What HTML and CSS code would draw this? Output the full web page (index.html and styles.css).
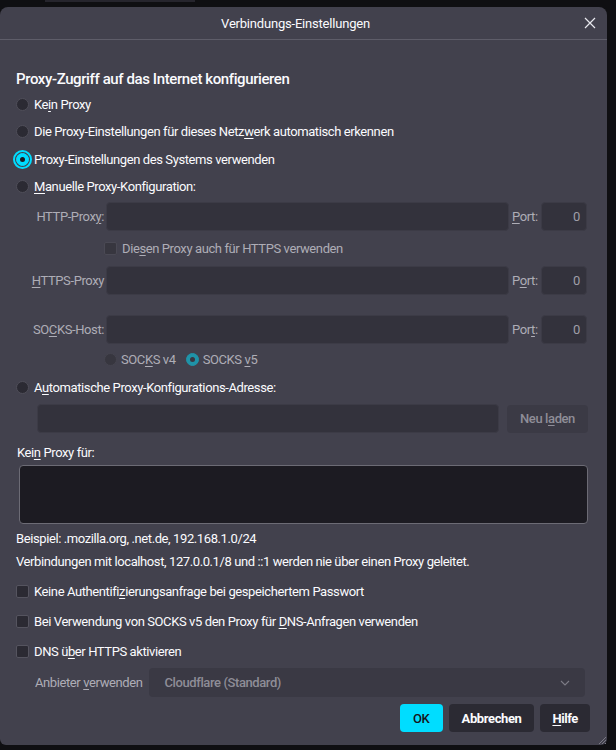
FILE: index.html
```html
<!DOCTYPE html>
<html lang="de">
<head>
<meta charset="utf-8">
<title>Verbindungs-Einstellungen</title>
<link rel="stylesheet" href="styles.css">
</head>
<body>
<div class="backdrop-strip"></div>
<div class="dialog">
  <div class="titlebar">
    <div class="title">Verbindungs-Einstellungen</div>
    <div class="close">
      <svg width="12" height="12" viewBox="0 0 12 12"><path d="M1 1 L11 11 M11 1 L1 11" stroke="#e8e8ee" stroke-width="1.2" fill="none"/></svg>
    </div>
  </div>
  <div class="content">
    <h1 class="heading">Proxy-Zugriff auf das Internet konfigurieren</h1>
    <div class="option"><span class="radio"></span><span>Ke<u>i</u>n Proxy</span></div>
    <div class="option"><span class="radio"></span><span>Die Proxy-Einstellungen für dieses Netz<u>w</u>erk automatisch erkennen</span></div>
    <div class="option"><span class="radio checked focus"></span><span>Proxy-Einstellungen des Systems verwenden</span></div>
    <div class="option"><span class="radio"></span><span><u>M</u>anuelle Proxy-Konfiguration:</span></div>

    <div class="proxy-grid">
      <div class="plabel">HTTP-Prox<u>y</u>:</div>
      <div class="field"></div>
      <div class="portlabel"><u>P</u>ort:</div>
      <div class="field port">0</div>

      <div class="check-row">
        <span class="box disabled"></span><span>Die<u>s</u>en Proxy auch für HTTPS verwenden</span>
      </div>

      <div class="plabel"><u>H</u>TTPS-Proxy</div>
      <div class="field"></div>
      <div class="portlabel">P<u>o</u>rt:</div>
      <div class="field port">0</div>

      <div class="spacer"></div>

      <div class="plabel">SO<u>C</u>KS-Host:</div>
      <div class="field"></div>
      <div class="portlabel">Por<u>t</u>:</div>
      <div class="field port">0</div>

      <div class="socks-row">
        <span class="radio disabled"></span><span>SOC<u>K</u>S v4</span>
        <span class="radio checked disabled v5"></span><span>SOCKS <u>v</u>5</span>
      </div>
    </div>

    <div class="option auto"><span class="radio"></span><span>A<u>u</u>tomatische Proxy-Konfigurations-Adresse:</span></div>
    <div class="auto-row">
      <div class="field grow"></div>
      <div class="btn-disabled">Neu l<u>a</u>den</div>
    </div>

    <div class="noproxy-label">Kei<u>n</u> Proxy für:</div>
    <div class="textarea"></div>
    <div class="hint first">Beispiel: .mozilla.org, .net.de, 192.168.1.0/24</div>
    <div class="hint">Verbindungen mit localhost, 127.0.0.1/8 und ::1 werden nie über einen Proxy geleitet.</div>

    <div class="check"><span class="box"></span><span>Keine Authentifi<u>z</u>ierungsanfrage bei gespeichertem Passwort</span></div>
    <div class="check"><span class="box"></span><span>Bei Verwendung von SOCKS v5 den Proxy für <u>D</u>NS-Anfragen verwenden</span></div>
    <div class="check"><span class="box"></span><span>DNS ü<u>b</u>er HTTPS aktivieren</span></div>

    <div class="provider-row">
      <div class="provider-label">Anbieter <u>v</u>erwenden</div>
      <div class="select">
        <span>Cloudflare (Standard)</span>
        <svg width="10" height="6" viewBox="0 0 10 6"><path d="M1 1 L5 5 L9 1" stroke="#7d7c86" stroke-width="1.1" fill="none"/></svg>
      </div>
    </div>

    <div class="buttons">
      <div class="btn primary">OK</div>
      <div class="btn wide">Abbrechen</div>
      <div class="btn"><u>H</u>ilfe</div>
    </div>
  </div>
  <svg class="grip" width="8" height="8" viewBox="0 0 8 8"><path d="M8 1 L1 8 M8 4 L4 8 M8 7 L7 8" stroke="#7a7984" stroke-width="1" fill="none"/></svg>
</div>
</body>
</html>
```

FILE: styles.css
```css
* { box-sizing: border-box; }

html, body {
  margin: 0;
  padding: 0;
  background: #0f0f12;
}

body {
  width: 616px;
  height: 750px;
  overflow: hidden;
  font-family: Roboto, "Noto Sans", sans-serif;
  font-size: 13px;
  letter-spacing: -0.4px;
  color: #fbfbfe;
}

u { text-decoration: underline; text-underline-offset: 2px; }

.backdrop-strip {
  margin-left: 45px;
  width: 150px;
  height: 2px;
  background: #26252d;
  margin-bottom: 5px;
}

.dialog {
  position: relative;
  width: 607px;
  height: 738px;
  background: #42414d;
  border-radius: 8px 8px 6px 6px;
}

.titlebar {
  height: 33px;
  display: flex;
  align-items: center;
  padding-left: 12px;
  padding-right: 6px;
  border-bottom: 1px solid #5e5d69;
}

.title {
  flex: 1;
  text-align: center;
  font-size: 13px;
  letter-spacing: -0.2px;
}

.close {
  width: 22px;
  height: 22px;
  display: flex;
  align-items: center;
  justify-content: center;
}

.content {
  padding: 0 17px 0 16px;
}

.heading {
  margin: 29px 0 2px;
  font-size: 15px;
  font-weight: 500;
  letter-spacing: -0.4px;
  line-height: 20px;
}

.option {
  height: 27.3px;
  display: flex;
  align-items: center;
  gap: 5px;
}

.radio {
  width: 13px;
  height: 13px;
  border-radius: 50%;
  background: #2b2a33;
  border: 1px solid #4f4e59;
  flex: none;
  position: relative;
}

.radio.checked {
  background: #00ddff;
  border-color: #00ddff;
}

.radio.checked::after {
  content: "";
  position: absolute;
  left: 3px;
  top: 3px;
  width: 5px;
  height: 5px;
  border-radius: 50%;
  background: #1c1b22;
}

.radio.focus {
  outline: 2px solid #00ddff;
  outline-offset: 1px;
}

.radio.disabled {
  background: #37363f;
  border-color: #45444f;
}

.radio.checked.disabled {
  background: #1f93a8;
  border-color: #1f93a8;
}

.radio.checked.disabled::after {
  background: #383742;
}

.proxy-grid {
  margin-top: 2px;
  display: grid;
  grid-template-columns: 88px 403px 28px 46px;
  column-gap: 2px;
  align-items: center;
}

.plabel {
  text-align: right;
  color: #aeadb6;
  white-space: nowrap;
}

.portlabel {
  color: #aeadb6;
  padding-left: 1px;
}

.field {
  height: 29px;
  background: #33323c;
  border: 1px solid #3c3b46;
  border-radius: 4px;
}

.field.port {
  text-align: right;
  line-height: 27px;
  padding-right: 6px;
  color: #9f9ea8;
}

.check-row {
  grid-column: 2 / 5;
  height: 35px;
  display: flex;
  align-items: center;
  gap: 5px;
  color: #aeadb6;
  margin-left: -2px;
}

.spacer {
  grid-column: 1 / 5;
  height: 20px;
}

.socks-row {
  grid-column: 2 / 5;
  height: 30px;
  display: flex;
  align-items: center;
  gap: 4px;
  color: #aeadb6;
  margin-left: -2px;
}

.socks-row .v5 { margin-left: 6px; }

.box {
  width: 13px;
  height: 13px;
  border-radius: 2px;
  background: #2b2a33;
  border: 1px solid #55545f;
  flex: none;
}

.box.disabled {
  background: #37363f;
  border-color: #4a4954;
}

.option.auto {
  height: 26px;
}

.auto-row {
  margin-top: 4px;
  padding-left: 21px;
  display: flex;
  align-items: center;
  gap: 8px;
}

.field.grow {
  width: 462px;
}

.btn-disabled {
  width: 81px;
  height: 28px;
  border-radius: 4px;
  background: #3b3a45;
  color: #8f8e98;
  font-weight: 500;
  display: flex;
  align-items: center;
  justify-content: center;
}

.noproxy-label {
  margin-top: 8px;
  height: 24px;
  line-height: 24px;
  padding-left: 1px;
}

.textarea {
  margin-left: 3px;
  width: 569px;
  height: 59px;
  background: #1c1b22;
  border: 1px solid #6c6b75;
  border-radius: 4px;
}

.hint {
  height: 23px;
  line-height: 23px;
}

.hint.first {
  margin-top: 3px;
}

.check {
  height: 30px;
  display: flex;
  align-items: center;
  gap: 5px;
}

.hint + .check { margin-top: 3px; }

.provider-row {
  margin-top: 2px;
  display: flex;
  align-items: center;
  gap: 7px;
  padding-left: 19px;
}

.provider-label {
  color: #aeadb6;
}

.select {
  width: 436px;
  height: 29px;
  background: #3a3944;
  border-radius: 4px;
  display: flex;
  align-items: center;
  justify-content: space-between;
  padding: 0 15px 0 15px;
  color: #8e8d97;
  font-weight: 500;
}

.buttons {
  margin-top: 7px;
  display: flex;
  justify-content: flex-end;
  gap: 6px;
}

.btn {
  height: 28px;
  padding: 0 12px;
  border-radius: 4px;
  background: #2b2a33;
  color: #fbfbfe;
  font-weight: 700;
  display: flex;
  align-items: center;
  justify-content: center;
}

.btn.wide {
  padding: 0 13px;
}

.btn.primary {
  background: #00ddff;
  color: #15141a;
  width: 43px;
  font-weight: 500;
}

.grip {
  position: absolute;
  right: 1px;
  bottom: 1px;
}
```
